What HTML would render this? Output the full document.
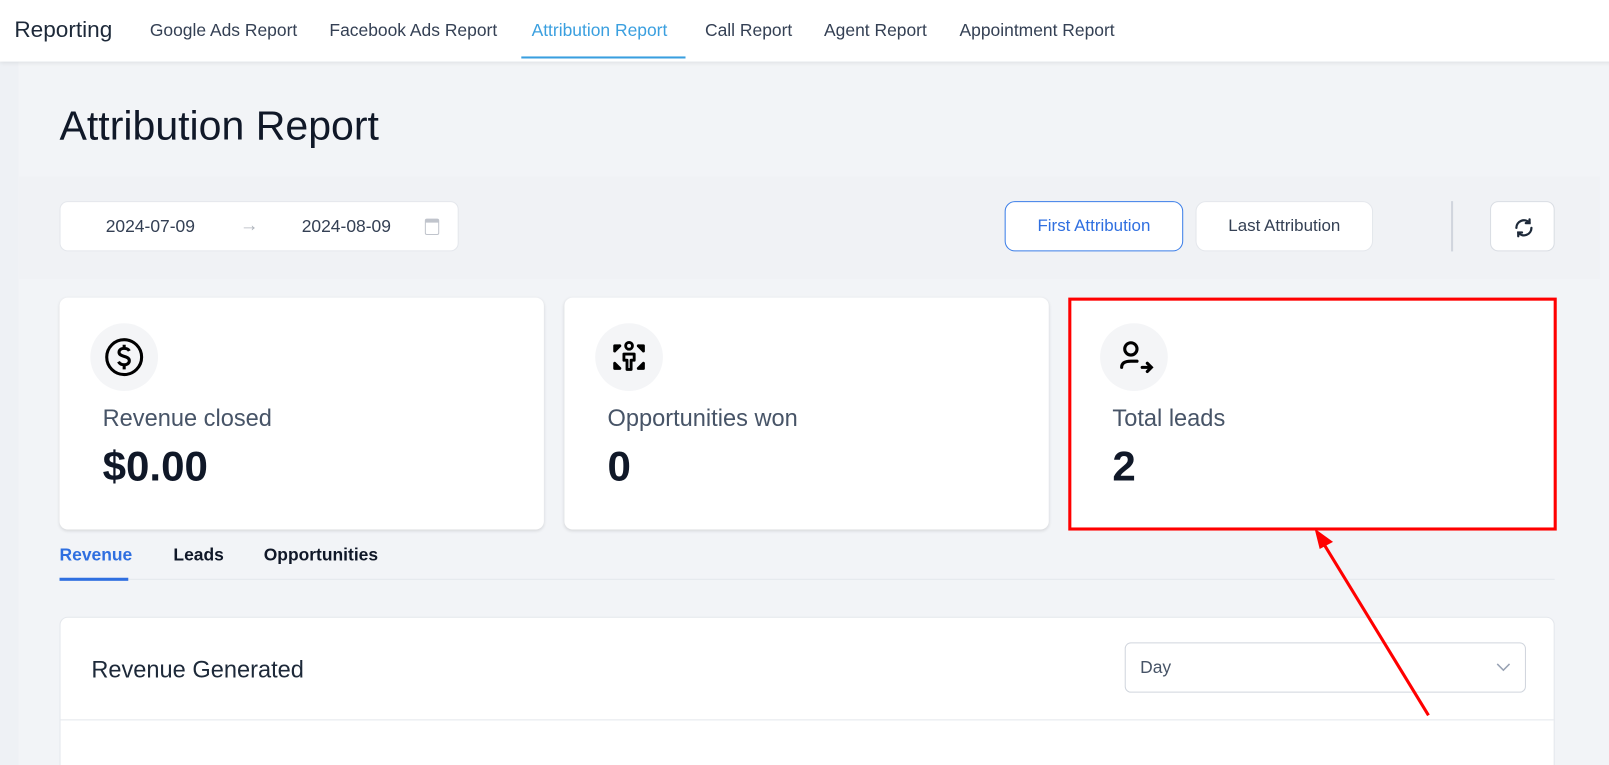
<!DOCTYPE html>
<html><head><meta charset="utf-8"><style>
*{box-sizing:border-box;margin:0;padding:0}
html,body{width:1609px;height:765px;overflow:hidden}
body{background:#eef1f5;font-family:"Liberation Sans",sans-serif;position:relative}
#w{position:absolute;left:0;top:0;width:1609px;height:765px;transform:scale(1.0262);transform-origin:0 0}
.nav{position:absolute;left:0;top:0;width:1609px;height:60px;background:#fff;box-shadow:0 2px 4px rgba(0,0,0,.08);z-index:2}
.nav span{position:absolute;top:20px;font-size:17px;color:#344054}
.nav .brand{left:14px;top:16px;font-size:22px;color:#1d2939}
.nav .act{color:#3a9fdf}
.uline{position:absolute;left:508px;top:55px;width:160px;height:2px;background:#3a9fdf}
.main{position:absolute;left:18px;top:60px;width:1591px;height:705px;background:#f2f4f7}
.sub{position:absolute;left:18px;top:172px;width:1541px;height:100px;background:#f0f2f5}
h1{position:absolute;left:58px;top:101px;font-size:40px;font-weight:normal;color:#101828}
.box{position:absolute;background:#fff;border:1px solid #e4e7ec;border-radius:8px}
.card{position:absolute;top:290px;width:472px;height:226px;background:#fff;border-radius:8px;box-shadow:0 1px 3px rgba(0,0,0,.12)}
.ic{position:absolute;left:30px;top:25px;width:66px;height:66px;border-radius:50%;background:#f4f5f7}
.lbl{position:absolute;left:42px;top:104px;font-size:23px;color:#475467}
.val{position:absolute;left:42px;top:141px;font-size:41px;font-weight:bold;color:#101828}
.t{position:absolute;top:531px;font-size:17px;color:#101828;font-weight:bold}
</style></head><body><div id="w">
<div class="nav" style="width:1640px">
<span class="brand">Reporting</span>
<span style="left:146px">Google Ads Report</span>
<span style="left:321px">Facebook Ads Report</span>
<span class="act" style="left:518px">Attribution Report</span>
<span style="left:687px">Call Report</span>
<span style="left:803px">Agent Report</span>
<span style="left:935px">Appointment Report</span>
<div class="uline"></div>
</div>
<div class="main"></div>
<div class="sub"></div>
<h1>Attribution Report</h1>
<div class="box" style="left:58px;top:196px;width:389px;height:49px">
<span style="position:absolute;left:44px;top:14px;font-size:17px;color:#344054">2024-07-09</span>
<span style="position:absolute;left:175px;top:12px;font-size:18px;color:#b0b5bd">→</span>
<span style="position:absolute;left:235px;top:14px;font-size:17px;color:#344054">2024-08-09</span>
<div style="position:absolute;left:355px;top:16px;width:14px;height:16px;border:1.5px solid #c0c4cc;border-radius:2px;border-top-width:4px"></div>
</div>
<div class="box" style="left:979px;top:196px;width:174px;height:49px;border-color:#3b7ee8;border-radius:10px;text-align:center;line-height:47px;font-size:16.5px;color:#2f6fe0">First Attribution</div>
<div class="box" style="left:1165px;top:196px;width:173px;height:49px;border-radius:10px;text-align:center;line-height:47px;font-size:16.5px;color:#344054">Last Attribution</div>
<div style="position:absolute;left:1414px;top:196px;width:2px;height:49px;background:#d0d5dd"></div>
<div class="box" style="left:1452px;top:196px;width:63px;height:49px;border-color:#d9dde3">
<svg style="position:absolute;left:21px;top:14px" width="22" height="22" viewBox="0 0 24 24" fill="none" stroke="#1d2939" stroke-width="2.4" stroke-linecap="round"><path d="M4 12a8 8 0 0 1 14-5.3"/><path d="M20 12a8 8 0 0 1-14 5.3"/><path d="M18 3v4h-4" /><path d="M6 21v-4h4"/></svg>
</div>
<div class="card" style="left:58px"><div class="ic">
<svg style="position:absolute;left:13px;top:13px" width="40" height="40" viewBox="0 0 40 40" fill="none" stroke="#000" stroke-width="3"><circle cx="20" cy="20" r="17"/><path d="M25 14c-1-2-3-2.5-5-2.5-3 0-5 1.5-5 3.8 0 5 10 3 10 8.2 0 2.5-2.3 4-5 4-2.5 0-4.5-1-5.5-3M20 8v3.5M20 28.5V32"/></svg></div>
<div class="lbl">Revenue closed</div><div class="val">$0.00</div></div>
<div class="card" style="left:550px"><div class="ic">
<svg style="position:absolute;left:13px;top:13px" width="40" height="40" viewBox="0 0 40 40" fill="none" stroke="#000" stroke-width="2.8" stroke-linecap="round" stroke-linejoin="round"><circle cx="20" cy="9" r="3.3"/><path d="M15 17h10v6h-3v9h-4v-9h-3z"/><path d="M6 14l5-5M6 9v5M6 9h5M34 14l-5-5M34 9v5M34 9h-5M6 26l5 5M6 31v-5M6 31h5M34 26l-5 5M34 31v-5M34 31h-5"/></svg></div>
<div class="lbl">Opportunities won</div><div class="val">0</div></div>
<div class="card" style="left:1042px;box-shadow:none;border-radius:0"><div class="ic">
<svg style="position:absolute;left:13px;top:13px" width="40" height="40" viewBox="0 0 40 40" fill="none" stroke="#000" stroke-width="3" stroke-linecap="round"><circle cx="17" cy="12" r="6"/><path d="M8 30c0-4 3-6 9-6h6M28 30h8M33 26l4 4-4 4"/></svg></div>
<div class="lbl">Total leads</div><div class="val">2</div></div>
<div style="position:absolute;left:1041px;top:290px;width:476px;height:227px;border:3px solid #ff0000"></div>
<span class="t" style="left:58px;color:#2f6fe0">Revenue</span>
<span class="t" style="left:169px">Leads</span>
<span class="t" style="left:257px">Opportunities</span>
<div style="position:absolute;left:58px;top:564px;width:1457px;height:1px;background:#e4e7ec"></div>
<div style="position:absolute;left:58px;top:563px;width:67px;height:3px;background:#2f6fe0"></div>
<div class="box" style="left:58px;top:601px;width:1457px;height:175px;border-radius:8px">
<span style="position:absolute;left:30px;top:37px;font-size:23px;color:#1d2939">Revenue Generated</span>
<div style="position:absolute;left:1037px;top:24px;width:391px;height:49px;border:1px solid #d0d5dd;border-radius:6px">
<span style="position:absolute;left:14px;top:14px;font-size:17px;color:#475467">Day</span>
<svg style="position:absolute;right:14px;top:18px" width="14" height="10" viewBox="0 0 14 10" fill="none" stroke="#98a2b3" stroke-width="1.5"><path d="M1 2l6 6 6-6"/></svg></div>
<div style="position:absolute;left:0;top:99px;width:100%;height:1px;background:#e4e7ec"></div>
</div>
<svg style="position:absolute;left:0;top:0" width="1609" height="765"><line x1="1392" y1="697" x2="1290" y2="530" stroke="#ff0000" stroke-width="3"/><path d="M1281 515l18 13-13 7z" fill="#ff0000"/></svg>
</div></body></html>
